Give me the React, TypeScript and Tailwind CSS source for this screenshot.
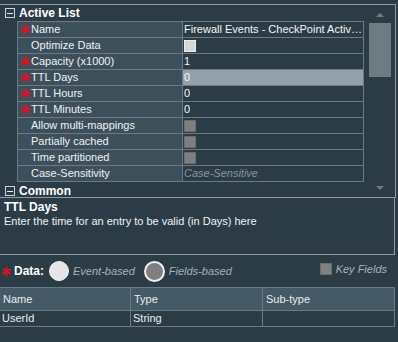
import React from 'react'

const font = { fontFamily: '"Liberation Sans", Arial, sans-serif' }

type Row = {
  label: string
  required?: boolean
  value?: string
  kind?: 'text' | 'checkLight' | 'check' | 'italic'
  selected?: boolean
}

const rows: Row[] = [
  { label: 'Name', required: true, value: 'Firewall Events - CheckPoint Active List Events', kind: 'text' },
  { label: 'Optimize Data', kind: 'checkLight' },
  { label: 'Capacity (x1000)', required: true, value: '1', kind: 'text' },
  { label: 'TTL Days', required: true, value: '0', kind: 'text', selected: true },
  { label: 'TTL Hours', required: true, value: '0', kind: 'text' },
  { label: 'TTL Minutes', required: true, value: '0', kind: 'text' },
  { label: 'Allow multi-mappings', kind: 'check' },
  { label: 'Partially cached', kind: 'check' },
  { label: 'Time partitioned', kind: 'check' },
  { label: 'Case-Sensitivity', value: 'Case-Sensitive', kind: 'italic' },
]

function Star({ className = '' }: { className?: string }) {
  return (
    <svg width="9" height="9" viewBox="0 0 9 9" className={className}>
      <g stroke="#e0141e" strokeWidth="2" strokeLinecap="square">
        <line x1="4.5" y1="0.5" x2="4.5" y2="8.5" />
        <line x1="1" y1="2.5" x2="8" y2="6.5" />
        <line x1="1" y1="6.5" x2="8" y2="2.5" />
      </g>
    </svg>
  )
}

function Minus() {
  return (
    <div className="w-[10px] h-[10px] border border-[#c9d2d8] flex items-center justify-center">
      <div className="w-[6px] h-px bg-[#e8eef2]" />
    </div>
  )
}

function Section({ title }: { title: string }) {
  return (
    <div className="h-[16px] flex items-center pl-[5px] gap-[4px]">
      <Minus />
      <span className="text-[12px] font-bold text-white">{title}</span>
    </div>
  )
}

function ValueCell({ row }: { row: Row }) {
  if (row.kind === 'checkLight') {
    return <div className="ml-[1px] w-[12px] h-[12px] bg-[#d6d6d6] border border-[#eeeeee]" />
  }
  if (row.kind === 'check') {
    return <div className="ml-[1px] w-[12px] h-[12px] bg-[#7f7f7f] border border-[#6a6a6a]" />
  }
  if (row.kind === 'italic') {
    return <span className="italic text-[#8796a0] pl-[1px]">{row.value}</span>
  }
  return <span className="truncate text-[#f2f6f8] pl-[1px]">{row.value}</span>
}

export default function App() {
  return (
    <div className="w-[398px] h-[342px] bg-[#2c3c47] text-[11px] text-[#e8eef2] overflow-hidden" style={font}>
      {/* property panel */}
      <div className="mt-[4px] w-[396px] h-[194px] border-t border-r border-b border-[#8c9aa3] flex">
        <div className="w-[366px] flex flex-col">
          <Section title="Active List" />
          <div className="ml-[17px] w-[347px] border-t border-l border-[#6b7b85]">
            {rows.map((r) => (
              <div key={r.label} className="h-[16px] flex border-b border-[#6b7b85]">
                <div className="w-[165px] bg-[#3d4f5b] flex items-center border-r border-[#6b7b85]">
                  <div className="w-[13px] flex items-center justify-center pl-[2px]">
                    {r.required && <Star />}
                  </div>
                  <span className="text-[#eef3f6]">{r.label}</span>
                </div>
                <div
                  className={`w-[181px] flex items-center overflow-hidden border-r border-[#6b7b85] ${
                    r.selected ? 'bg-[#95a1aa]' : ''
                  }`}
                >
                  <ValueCell row={r} />
                </div>
              </div>
            ))}
          </div>
          <div className="mt-[1px]">
            <Section title="Common" />
          </div>
        </div>
        {/* scrollbar */}
        <div className="flex-1 flex flex-col items-center pt-[8px] pr-[1px]">
          <div className="w-0 h-0 border-l-[4px] border-r-[4px] border-b-[4px] border-l-transparent border-r-transparent border-b-[#6f7d85]" />
          <div className="mt-[6px] w-[22px] h-[54px] bg-[#6e7b82]" />
          <div className="flex-1" />
          <div className="mb-[7px] w-0 h-0 border-l-[4px] border-r-[4px] border-t-[4px] border-l-transparent border-r-transparent border-t-[#6f7d85]" />
        </div>
      </div>

      {/* description */}
      <div className="w-[395px] h-[57px] border-r border-b border-[#8c9aa3] px-[4px] pt-[2px]">
        <div className="text-[12px] font-bold text-white leading-[14px]">TTL Days</div>
        <div className="text-[11px] leading-[14px] text-[#eef3f6]">
          Enter the time for an entry to be valid (in Days) here
        </div>
      </div>

      {/* data row */}
      <div className="h-[32px] flex items-center pl-[2px] pr-[11px]">
        <Star />
        <span className="ml-[3px] text-[12px] font-bold text-white">Data:</span>
        <div className="ml-[5px] w-[20px] h-[20px] rounded-full bg-[#e6e6e6] border border-[#f2f2f2]" />
        <span className="ml-[4px] italic text-[#a6b1b8] text-[11px]">Event-based</span>
        <div className="ml-[9px] w-[21px] h-[21px] rounded-full bg-[#7f7f7f] border-[2px] border-[#f0f0f0]" />
        <span className="ml-[4px] italic text-[#a6b1b8] text-[11px]">Fields-based</span>
        <div className="flex-1" />
        <div className="w-[12px] h-[12px] bg-[#808080] border border-[#6a6a6a] -mt-[4px]" />
        <span className="ml-[4px] italic text-[#a6b1b8] text-[11px] -mt-[4px]">Key Fields</span>
      </div>

      {/* table */}
      <div className="w-[395px] border-t border-[#6b7b85]">
        <div className="h-[23px] flex bg-[#465966] border-b border-[#6b7b85]">
          <div className="w-[131px] pl-[3px] flex items-center border-r border-[#6b7b85]">Name</div>
          <div className="w-[132px] pl-[3px] flex items-center border-r border-[#6b7b85]">Type</div>
          <div className="flex-1 pl-[3px] flex items-center border-r border-[#6b7b85]">Sub-type</div>
        </div>
        <div className="h-[16px] flex border-b border-[#6b7b85]">
          <div className="w-[131px] pl-[2px] flex items-center border-r border-[#6b7b85]">UserId</div>
          <div className="w-[132px] pl-[2px] flex items-center border-r border-[#6b7b85]">String</div>
          <div className="flex-1 border-r border-[#6b7b85]" />
        </div>
      </div>
    </div>
  )
}
